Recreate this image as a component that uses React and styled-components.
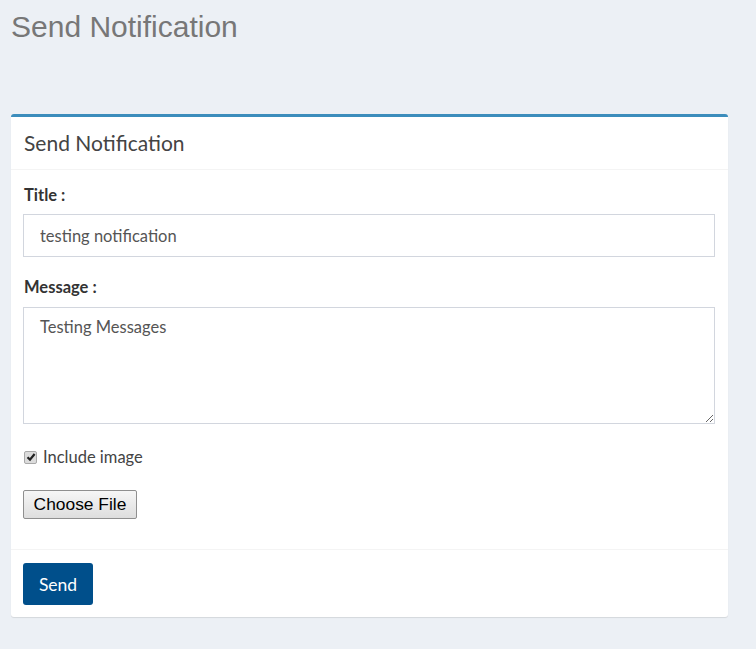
import React from 'react';
import styled, { createGlobalStyle } from 'styled-components';

const GlobalStyle = createGlobalStyle`
  html, body {
    margin: 0;
    padding: 0;
    background: #ecf0f5;
  }
  body {
    font-family: Lato, "Liberation Sans", sans-serif;
    color: #333;
  }
`;

const Page = styled.div`
  padding: 0 28px 30px 11px;
`;

const PageTitle = styled.h1`
  margin: 0;
  padding-top: 10px;
  height: 114px;
  box-sizing: border-box;
  font-family: "Liberation Sans", Arial, sans-serif;
  font-weight: 400;
  font-size: 30px;
  line-height: 34px;
  color: #777;
`;

const Box = styled.div`
  background: #fff;
  border-top: 3px solid #3c8dbc;
  border-radius: 3px;
  box-shadow: 0 1px 1px rgba(0, 0, 0, 0.1);
`;

const BoxHeader = styled.div`
  height: 51px;
  display: flex;
  align-items: center;
  padding: 0 13px 1px;
  border-bottom: 1px solid #f4f4f4;
  font-size: 21px;
  color: #444;
`;

const BoxBody = styled.div`
  display: flex;
  flex-direction: column;
  align-items: flex-start;
  padding: 14px 13px 30px 12px;
`;

const FieldGroup = styled.div`
  display: flex;
  flex-direction: column;
  align-self: stretch;
  margin-bottom: 19px;
`;

const Label = styled.label`
  font-weight: 700;
  font-size: 16.5px;
  line-height: 22px;
  margin: 0 0 ${p => p.$gap || 8}px 1px;
  color: #333;
`;

const TextInput = styled.input`
  width: 100%;
  box-sizing: border-box;
  height: 43px;
  border: 1px solid #d2d6de;
  padding: 0 16px;
  font-family: inherit;
  font-size: 16.5px;
  color: #555;
  outline: none;
`;

const TextArea = styled.textarea`
  width: 100%;
  box-sizing: border-box;
  height: 117px;
  border: 1px solid #d2d6de;
  padding: 9px 16px;
  font-family: inherit;
  font-size: 16.5px;
  color: #555;
  outline: none;
  resize: vertical;
`;

const CheckRow = styled.label`
  display: flex;
  align-items: center;
  gap: 6px;
  font-size: 16.5px;
  color: #444;
  margin: 4px 0 23px 1px;
`;

const CheckBox = styled.span`
  width: 11px;
  height: 11px;
  display: inline-flex;
  align-items: center;
  justify-content: center;
  background: #dcdcdc;
  border: 1px solid #a9a9a9;
  border-radius: 2px;
`;

const FileButton = styled.button`
  font-family: "Liberation Sans", Arial, sans-serif;
  font-size: 17.4px;
  color: #000;
  height: 29px;
  width: 114px;
  padding: 0;
  background: linear-gradient(#f6f6f6, #dedede);
  border: 1px solid #8f8f8f;
  border-radius: 2px;
`;

const BoxFooter = styled.div`
  border-top: 1px solid #f4f4f4;
  padding: 13px 12px 12px;
`;

const SendButton = styled.button`
  height: 42px;
  width: 70px;
  border: none;
  border-radius: 3px;
  background: #004f8b;
  color: #fff;
  font-family: inherit;
  font-size: 17.5px;
`;

export default function App() {
  return (
    <>
      <GlobalStyle />
      <Page>
        <PageTitle>Send Notification</PageTitle>
        <Box>
          <BoxHeader>Send Notification</BoxHeader>
          <BoxBody>
            <FieldGroup>
              <Label>Title :</Label>
              <TextInput defaultValue="testing notification" />
            </FieldGroup>
            <FieldGroup>
              <Label $gap={9}>Message :</Label>
              <TextArea defaultValue="Testing Messages" />
            </FieldGroup>
            <CheckRow>
              <CheckBox>
                <svg width="10" height="10" viewBox="0 0 10 10">
                  <path d="M1.5 5.2 L4 7.6 L8.6 2" fill="none" stroke="#222" strokeWidth="2.2" />
                </svg>
              </CheckBox>
              Include image
            </CheckRow>
            <FileButton type="button">Choose File</FileButton>
          </BoxBody>
          <BoxFooter>
            <SendButton type="button">Send</SendButton>
          </BoxFooter>
        </Box>
      </Page>
    </>
  );
}
